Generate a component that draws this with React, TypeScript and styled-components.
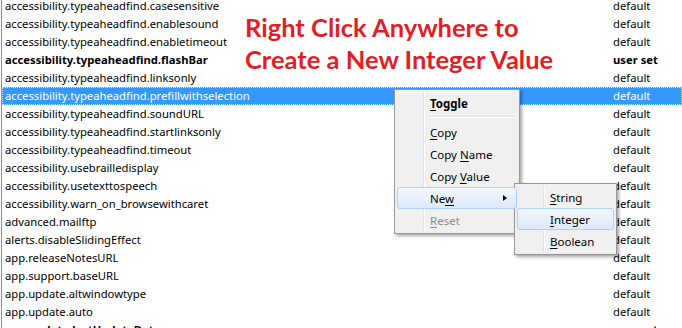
import styled, { createGlobalStyle } from 'styled-components';

const GlobalStyle = createGlobalStyle`
  html, body {
    margin: 0;
    padding: 0;
    background: #ffffff;
  }
`;

const Page = styled.div`
  position: relative;
  width: 682px;
  height: 328px;
  overflow: hidden;
  background: #ffffff;
  font-family: "Noto Sans", "Open Sans", sans-serif;
  font-size: 11.25px;
  color: #000000;
`;

const PrefList = styled.div`
  display: flex;
  flex-direction: column;
  margin: -3px 0 0 1px;
  border-left: 1px solid #8e8f8f;
`;

const PrefRow = styled.div<{ selected?: boolean; modified?: boolean }>`
  display: grid;
  grid-template-columns: 611px 1fr;
  height: 18px;
  line-height: 18px;
  box-sizing: border-box;
  white-space: nowrap;
  font-weight: ${p => (p.modified ? 700 : 400)};
  background: ${p => (p.selected ? '#3399ff' : 'transparent')};
  color: ${p => (p.selected ? '#ffffff' : '#000000')};
  outline: ${p => (p.selected ? '1px dotted #c9e2ff' : 'none')};
  outline-offset: -1px;
`;

const NameCell = styled.span`
  padding-left: 3px;
  overflow: hidden;
`;

const ValueCell = styled.span`
  overflow: hidden;
`;

const Callout = styled.div`
  position: absolute;
  left: 245px;
  top: 11px;
  font-family: Lato, "Open Sans", sans-serif;
  font-weight: 700;
  font-size: 25.5px;
  line-height: 32px;
  color: #e21d25;
  white-space: nowrap;
`;

const Menu = styled.div<{ left: number; top: number; width: number }>`
  position: absolute;
  left: ${p => p.left}px;
  top: ${p => p.top}px;
  width: ${p => p.width}px;
  box-sizing: border-box;
  padding: 2px;
  background: #f0f0f0;
  border: 1px solid #979797;
  box-shadow: 2px 2px 3px rgba(0, 0, 0, 0.35);
  display: flex;
  flex-direction: column;

  &::before {
    content: '';
    position: absolute;
    left: 28px;
    top: 2px;
    bottom: 2px;
    width: 1px;
    background: #e2e3e3;
    box-shadow: 1px 0 0 #ffffff;
  }
`;

const MenuItem = styled.div<{ active?: boolean; disabled?: boolean; strong?: boolean }>`
  position: relative;
  height: 22px;
  line-height: 21px;
  box-sizing: border-box;
  padding-left: 32px;
  font-family: "Noto Sans", "Open Sans", sans-serif;
  font-size: 11.5px;
  font-weight: ${p => (p.strong ? 700 : 400)};
  color: ${p => (p.disabled ? '#8d8d8d' : '#000000')};
  border: 1px solid ${p => (p.active ? '#aecff7' : 'transparent')};
  border-radius: 3px;
  background: ${p =>
    p.active ? 'linear-gradient(#f2f7fd, #dce9f8)' : 'transparent'};
  z-index: 1;
`;

const Key = styled.span`
  text-decoration: underline;
  text-underline-offset: 2px;
`;

const Separator = styled.div`
  height: 1px;
  margin: 2px 0 3px 30px;
  background: #e2e3e3;
  border-bottom: 1px solid #ffffff;
`;

const SubArrow = styled.span`
  position: absolute;
  right: 9px;
  top: 7px;
  width: 0;
  height: 0;
  border-top: 3.5px solid transparent;
  border-bottom: 3.5px solid transparent;
  border-left: 4px solid #000000;
`;

const prefs: { name: string; value: string; modified?: boolean; selected?: boolean }[] = [
  { name: 'accessibility.typeaheadfind.casesensitive', value: 'default' },
  { name: 'accessibility.typeaheadfind.enablesound', value: 'default' },
  { name: 'accessibility.typeaheadfind.enabletimeout', value: 'default' },
  { name: 'accessibility.typeaheadfind.flashBar', value: 'user set', modified: true },
  { name: 'accessibility.typeaheadfind.linksonly', value: 'default' },
  { name: 'accessibility.typeaheadfind.prefillwithselection', value: 'default', selected: true },
  { name: 'accessibility.typeaheadfind.soundURL', value: 'default' },
  { name: 'accessibility.typeaheadfind.startlinksonly', value: 'default' },
  { name: 'accessibility.typeaheadfind.timeout', value: 'default' },
  { name: 'accessibility.usebrailledisplay', value: 'default' },
  { name: 'accessibility.usetexttospeech', value: 'default' },
  { name: 'accessibility.warn_on_browsewithcaret', value: 'default' },
  { name: 'advanced.mailftp', value: 'default' },
  { name: 'alerts.disableSlidingEffect', value: 'default' },
  { name: 'app.releaseNotesURL', value: 'default' },
  { name: 'app.support.baseURL', value: 'default' },
  { name: 'app.update.altwindowtype', value: 'default' },
  { name: 'app.update.auto', value: 'default' },
  { name: 'app.update.lastUpdateDate', value: 'user set', modified: true },
];

export default function App() {
  return (
    <>
      <GlobalStyle />
      <Page>
        <PrefList>
          {prefs.map(p => (
            <PrefRow key={p.name} selected={p.selected} modified={p.modified}>
              <NameCell>{p.name}</NameCell>
              <ValueCell>{p.value}</ValueCell>
            </PrefRow>
          ))}
        </PrefList>

        <Callout>
          Right Click Anywhere to
          <br />
          Create a New Integer Value
        </Callout>

        <Menu left={394} top={89} width={126}>
          <MenuItem strong>
            <Key>T</Key>oggle
          </MenuItem>
          <Separator />
          <MenuItem>
            <Key>C</Key>opy
          </MenuItem>
          <MenuItem>
            Copy <Key>N</Key>ame
          </MenuItem>
          <MenuItem>
            Copy <Key>V</Key>alue
          </MenuItem>
          <MenuItem active>
            Ne<Key>w</Key>
            <SubArrow />
          </MenuItem>
          <MenuItem disabled>
            <Key>R</Key>eset
          </MenuItem>
        </Menu>

        <Menu left={514} top={183} width={103}>
          <MenuItem>
            <Key>S</Key>tring
          </MenuItem>
          <MenuItem active>
            <Key>I</Key>nteger
          </MenuItem>
          <MenuItem>
            <Key>B</Key>oolean
          </MenuItem>
        </Menu>
      </Page>
    </>
  );
}
